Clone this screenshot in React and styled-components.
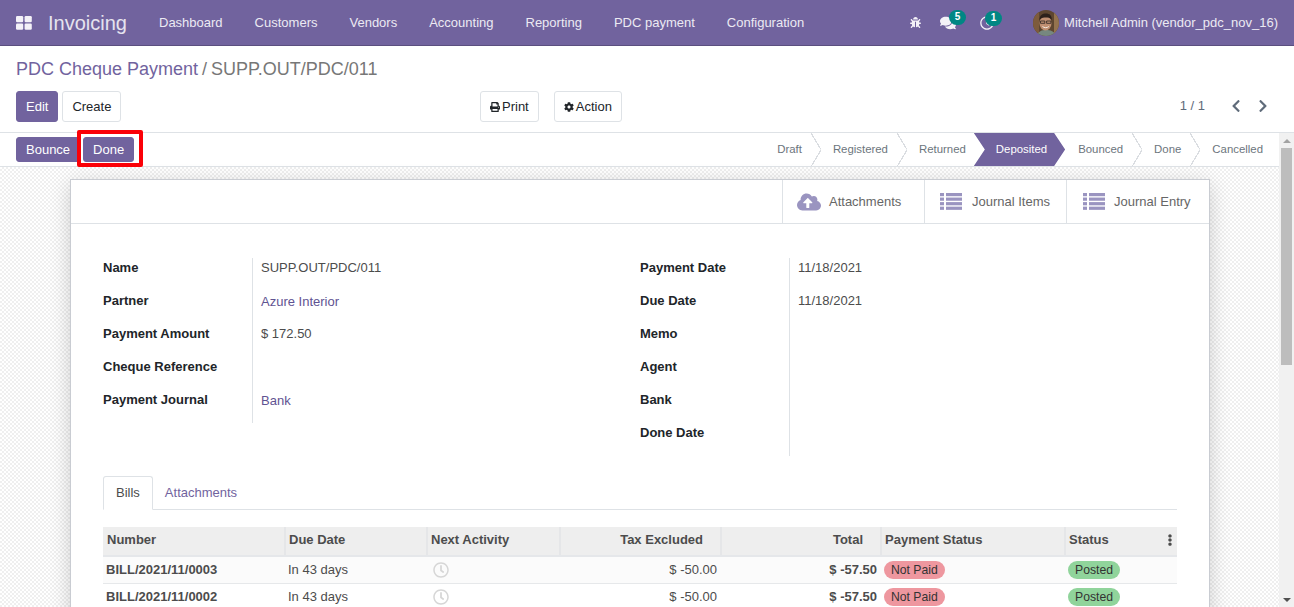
import React from 'react';
import styled, { createGlobalStyle } from 'styled-components';
import { FaBug, FaComments, FaPrint, FaCog, FaCloudUploadAlt, FaChevronLeft, FaChevronRight, FaEllipsisV, FaRegClock } from 'react-icons/fa';

const Global = createGlobalStyle`
  html, body { margin: 0; padding: 0; height: 100%; overflow: hidden; }
  body { font-family: "Liberation Sans", Arial, sans-serif; font-size: 13px; color: #4c4c4c; background: #fff; }
  #root { height: 100%; }
  * { box-sizing: border-box; }
`;

const Page = styled.div`height: 607px; display: flex; flex-direction: column; overflow: hidden;`;

const Nav = styled.header`
  height: 46px; flex: none; background: #71639e; border-bottom: 1px solid #5b4f7f;
  display: flex; align-items: center; color: #fff; padding-left: 16px; padding-right: 16px;
`;
const AppsIcon = styled.svg`width: 16px; height: 14px; fill: #f4f2f8; flex: none; margin-right: 16px;`;
const Brand = styled.span`font-size: 20px; color: #e6e3ef; margin-right: 16px; width: 79px; padding-top: 1px;`;
const NavItem = styled.span`font-size: 13px; padding: 0 16px; color: #eceaf3; white-space: nowrap;`;
const NavRight = styled.div`margin-left: auto; display: flex; align-items: center;`;
const NavIcon = styled.span`
  position: relative; display: inline-flex; align-items: center; justify-content: center;
  color: #f4f2f8; font-size: ${p => p.$size || 13}px; margin-left: ${p => p.$ml || 0}px; width: ${p => p.$w || 16}px;
`;
const Badge = styled.span`
  position: absolute; top: -5px; left: ${p => p.$left}px; min-width: 17px; height: 15px; padding: 0 4px; border-radius: 8px;
  background: #008784; color: #fff; font-size: 10px; font-weight: 700; line-height: 13px; text-align: center;
`;
const Avatar = styled.svg`width: 26px; height: 26px; border-radius: 50%; margin-left: 38px; margin-right: 5px; flex: none;`;
const UserName = styled.span`font-size: 13px; color: #eceaf3; white-space: nowrap;`;

const ControlPanel = styled.section`
  height: 87px; flex: none; background: #fff; border-bottom: 1px solid #dee2e6; padding: 12px 16px 0 16px;
`;
const Crumbs = styled.div`font-size: 18px; line-height: 23px; display: flex; gap: 4px; color: #777;`;
const CrumbLink = styled.span`color: #71639e;`;
const PanelRow = styled.div`display: grid; grid-template-columns: 464px 1fr auto; margin-top: 10px; height: 31px;`;
const ButtonGroup = styled.div`display: flex; gap: ${p => p.$gap || 4}px;`;
const Button = styled.button`
  font: inherit; font-size: 13px; height: ${p => p.$h || 31}px; padding: 0 ${p => p.$pad || 9}px; border-radius: 3px; cursor: pointer;
  display: inline-flex; align-items: center; gap: 2px;
  border: 1px solid ${p => p.$primary ? '#71639e' : '#dee2e6'};
  background: ${p => p.$primary ? '#71639e' : '#fff'};
  color: ${p => p.$primary ? '#fff' : '#212529'};
  svg { font-size: 10px; }
`;
const Pager = styled.div`display: flex; align-items: center; height: 31px; margin-right: 10px; margin-top: -1px;`;
const PagerText = styled.span`margin-right: 26px; color: #5f6b7a;`;
const PagerArrow = styled.span`
  display: inline-flex; width: 10px; color: #5f6b7a; font-size: 14px; margin-right: ${p => p.$mr || 0}px;
`;

const Workspace = styled.div`flex: 1; min-height: 0; display: flex;`;
const Content = styled.div`flex: 1; min-width: 0;`;
const ScrollTrack = styled.div`
  width: 15px; flex: none; background: #f1f1f1; display: flex; flex-direction: column; align-items: center;
`;
const ScrollArrow = styled.span`
  height: 15px; flex: none; display: flex; align-items: center; justify-content: center;
  margin-top: ${p => p.$down ? 'auto' : 0};
  &::before {
    content: ""; border-left: 4px solid transparent; border-right: 4px solid transparent;
    ${p => p.$down ? 'border-top: 4px solid #505050;' : 'border-bottom: 4px solid #a3a3a3;'}
  }
`;
const ScrollThumb = styled.span`width: 11px; height: 217px; background: #bdbdbd; flex: none;`;

const StatusBar = styled.div`
  height: 34px; background: #fff; border-bottom: 1px solid #dee2e6; display: flex; align-items: center; justify-content: space-between; padding-left: 16px;
`;
const Actions = styled.div`display: flex; gap: 3px; margin-top: -1px;`;
const Highlighted = styled.span`
  position: relative; display: inline-flex;
  &::after {
    content: ""; position: absolute; left: -6px; right: -9px; top: -7px; bottom: -5px; border: 4px solid #fb0007; border-radius: 2px; pointer-events: none;
  }
`;
const Steps = styled.div`display: flex; height: 33px; align-items: stretch;`;
const Step = styled.span`
  position: relative; font-size: 11.4px; line-height: 33px; color: ${p => p.$active ? '#fff' : '#6c757d'};
  padding: 0 ${p => p.$last ? 16 : 18}px 0 13px; white-space: nowrap;
  &::after {
    content: ""; display: ${p => p.$last || p.$active || p.$beforeActive ? 'none' : 'block'};
    position: absolute; right: -1px; top: 0; width: 10px; height: 33px;
    background: linear-gradient(to top right, transparent calc(50% - .6px), #dadde1 calc(50% - .6px), #dadde1 calc(50% + .6px), transparent calc(50% + .6px)) top / 100% 50% no-repeat,
      linear-gradient(to bottom right, transparent calc(50% - .6px), #dadde1 calc(50% - .6px), #dadde1 calc(50% + .6px), transparent calc(50% + .6px)) bottom / 100% 50% no-repeat;
  }
`;
const ActiveStep = styled(Step)`
  background: #71639e; margin-left: -10px; padding: 0 18px 0 22px;
  clip-path: polygon(0 0, calc(100% - 11px) 0, 100% 50%, calc(100% - 11px) 100%, 0 100%, 11px 50%);
`;

const Canvas = styled.div`
  background-color: #fff;
  background-image: conic-gradient(#efefef 25%, #fff 0 50%, #efefef 0 75%, #fff 0);
  background-size: 4px 4px; padding: 12px 69px 24px 70px; min-height: 800px;
`;
const Sheet = styled.main`
  background: #fff; border: 1px solid #c9ccd2; box-shadow: 0 5px 20px -1px rgba(0,0,0,.2); padding-bottom: 40px;
`;
const StatRow = styled.div`display: flex; justify-content: flex-end; height: 44px; border-bottom: 1px solid #dee2e6;`;
const StatButton = styled.div`
  display: flex; align-items: center; gap: ${p => p.$gap || 10}px; width: ${p => p.$w || 142}px; padding-left: ${p => p.$pl || 15}px; border-left: 1px solid #dee2e6; color: #666; white-space: nowrap;
  svg { color: #9a94c0; fill: #9a94c0; flex: none; }
  > svg:not([data-list]) { font-size: 24px; }
`;
const ListIcon = styled.svg`width: 22px; height: 17px;`;
const FormBody = styled.div`padding: 34px 32px 0 32px;`;
const Groups = styled.div`display: grid; grid-template-columns: 537px 1fr;`;
const Group = styled.div`display: grid; grid-template-columns: 149px 1fr; grid-auto-rows: 33px;`;
const Label = styled.div`font-weight: 700; color: #212529; padding-top: 2px; line-height: 15px;`;
const Value = styled.div`
  border-left: 1px solid #dee2e6; padding: ${p => p.$link ? 3 : 2}px 0 0 8px; line-height: 15px; color: ${p => p.$link ? '#5f5392' : '#4c4c4c'};
`;
const Tabs = styled.div`display: flex; margin-top: 20px; height: 34px; border-bottom: 1px solid #dee2e6;`;
const Tab = styled.div`
  height: 34px; padding: 0 12px; line-height: ${p => p.$active ? 32 : 34}px; white-space: nowrap;
  color: ${p => p.$active ? '#4c4c4c' : '#71639e'};
  ${p => p.$active ? 'border: 1px solid #dee2e6; border-bottom-color: #fff; border-radius: 3px 3px 0 0; background: #fff;' : ''}
`;
const Table = styled.table`
  width: 100%; table-layout: fixed; border-collapse: collapse; margin-top: 17px; font-size: 13px;
`;
const Th = styled.th`
  height: 29px; background: #eeeeee; border-bottom: 2px solid #e5e7ea; border-right: 2px solid #e5e6e8;
  padding: 0 ${p => p.$right ? 17 : 4}px 4px 3px; font-weight: 700; color: #4c4c4c;
  text-align: ${p => p.$right ? 'right' : 'left'}; white-space: nowrap; position: relative;
  &:first-child { padding-left: 4px; }
  &:last-child { border-right: 0; }
`;
const Td = styled.td`
  height: 27px; border-bottom: 1px solid #e6e8ea; padding: 0 4px 0 3px; color: #4c4c4c; background: ${p => p.$odd ? '#fbfbfb' : '#fff'};
  font-weight: ${p => p.$bold ? 700 : 400}; text-align: ${p => p.$right ? 'right' : 'left'}; white-space: nowrap; vertical-align: middle;
`;
const Pill = styled.span`
  display: inline-block; height: 18px; line-height: 18px; padding: 0 7px; border-radius: 9px; font-size: 12.2px; color: #333;
  background: ${p => p.$ok ? '#90d49b' : '#ee979f'};
`;
const ClockIcon = styled.span`display: inline-flex; color: #d6d6d6; font-size: 16px; margin-left: 3px; margin-top: 3px;`;
const KebabIcon = styled.span`position: absolute; right: 1px; top: 7px; font-size: 12px; color: #4c4c4c; display: inline-flex;`;

const navItems = ['Dashboard', 'Customers', 'Vendors', 'Accounting', 'Reporting', 'PDC payment', 'Configuration'];
const steps = ['Draft', 'Registered', 'Returned', 'Deposited', 'Bounced', 'Done', 'Cancelled'];
const left = [['Name', 'SUPP.OUT/PDC/011'], ['Partner', 'Azure Interior', true], ['Payment Amount', '$ 172.50'], ['Cheque Reference', ''], ['Payment Journal', 'Bank', true]];
const right = [['Payment Date', '11/18/2021'], ['Due Date', '11/18/2021'], ['Memo', ''], ['Agent', ''], ['Bank', ''], ['Done Date', '']];
const bills = ['BILL/2021/11/0003', 'BILL/2021/11/0002'];

const JournalIcon = () => (
  <ListIcon viewBox="0 0 22 17" data-list="true" aria-hidden="true">
    {[0, 4.55, 9.1, 13.65].map(y => (
      <React.Fragment key={y}>
        <rect x="0" y={y} width="4" height="3.2" />
        <rect x="6" y={y} width="16" height="3.2" />
      </React.Fragment>
    ))}
  </ListIcon>
);

export default function App() {
  return (
    <Page>
      <Global />
      <Nav>
        <AppsIcon viewBox="0 0 16 14" aria-hidden="true">
          <rect x="0" y="0" width="7.2" height="6.2" rx="1.2" />
          <rect x="8.6" y="0" width="7.2" height="6.2" rx="1.2" />
          <rect x="0" y="7.6" width="7.2" height="6.2" rx="1.2" />
          <rect x="8.6" y="7.6" width="7.2" height="6.2" rx="1.2" />
        </AppsIcon>
        <Brand>Invoicing</Brand>
        {navItems.map(n => <NavItem key={n}>{n}</NavItem>)}
        <NavRight>
          <NavIcon $size={11}><FaBug /></NavIcon>
          <NavIcon $size={16} $ml={16} $w={17}><FaComments /><Badge $left={10}>5</Badge></NavIcon>
          <NavIcon $size={14} $ml={23}><FaRegClock /><Badge $left={6}>1</Badge></NavIcon>
          <Avatar viewBox="0 0 26 26" aria-hidden="true">
            <rect width="26" height="26" fill="#5e4630" />
            <rect x="0" y="0" width="6" height="26" fill="#7d5b3c" />
            <rect x="21" y="0" width="5" height="26" fill="#94734f" />
            <path d="M4 26c1-5 5-6 9-6s9 1 10 6z" fill="#76877f" />
            <ellipse cx="12.5" cy="13" rx="6" ry="7.6" fill="#c08f72" />
            <path d="M6.5 10c0-5 3-6.5 6.5-6.5s6 2 5.8 6.5c-2-2.6-4-2.6-5.8-2.6s-4.5 0-6.5 2.6z" fill="#2d211b" />
            <path d="M7.5 11h4.3v2.3H7.5zM13.6 11h4.3v2.3h-4.3z" fill="none" stroke="#2b2320" strokeWidth=".8" />
            <path d="M9.5 16.5c1.800 1.600 4.500 1.600 6.300 0" fill="none" stroke="#f4e9e0" strokeWidth="1" />
          </Avatar>
          <UserName>Mitchell Admin (vendor_pdc_nov_16)</UserName>
        </NavRight>
      </Nav>
      <ControlPanel>
        <Crumbs><CrumbLink>PDC Cheque Payment</CrumbLink><span>/</span><span>SUPP.OUT/PDC/011</span></Crumbs>
        <PanelRow>
          <ButtonGroup>
            <Button $primary>Edit</Button>
            <Button>Create</Button>
          </ButtonGroup>
          <ButtonGroup $gap={15}>
            <Button><FaPrint />Print</Button>
            <Button><FaCog />Action</Button>
          </ButtonGroup>
          <Pager>
            <PagerText>1 / 1</PagerText>
            <PagerArrow $mr={17}><FaChevronLeft /></PagerArrow>
            <PagerArrow><FaChevronRight /></PagerArrow>
          </Pager>
        </PanelRow>
      </ControlPanel>
      <Workspace>
        <Content>
          <StatusBar>
            <Actions>
              <Button $primary $h={25}>Bounce</Button>
              <Highlighted><Button $primary $h={25}>Done</Button></Highlighted>
            </Actions>
            <Steps>
              {steps.map((s, i) => s === 'Deposited'
                ? <ActiveStep key={s} $active>{s}</ActiveStep>
                : <Step key={s} $last={i === steps.length - 1} $beforeActive={steps[i + 1] === 'Deposited'}>{s}</Step>)}
            </Steps>
          </StatusBar>
          <Canvas>
            <Sheet>
              <StatRow>
                <StatButton $gap={8} $pl={14}><FaCloudUploadAlt />Attachments</StatButton>
                <StatButton><JournalIcon />Journal Items</StatButton>
                <StatButton $w={143} $pl={16} $gap={9}><JournalIcon />Journal Entry</StatButton>
              </StatRow>
              <FormBody>
                <Groups>
                  <Group>
                    {left.map(([l, v, link]) => (
                      <React.Fragment key={l}><Label>{l}</Label><Value $link={link}>{v}</Value></React.Fragment>
                    ))}
                  </Group>
                  <Group>
                    {right.map(([l, v]) => (
                      <React.Fragment key={l}><Label>{l}</Label><Value>{v}</Value></React.Fragment>
                    ))}
                  </Group>
                </Groups>
                <Tabs>
                  <Tab $active>Bills</Tab>
                  <Tab>Attachments</Tab>
                </Tabs>
                <Table>
                  <colgroup>
                    <col style={{ width: 182 }} /><col style={{ width: 142 }} /><col style={{ width: 133 }} />
                    <col style={{ width: 161 }} /><col style={{ width: 160 }} /><col style={{ width: 184 }} /><col />
                  </colgroup>
                  <thead>
                    <tr>
                      <Th>Number</Th><Th>Due Date</Th><Th>Next Activity</Th><Th $right>Tax Excluded</Th><Th $right>Total</Th><Th>Payment Status</Th>
                      <Th>Status<KebabIcon><FaEllipsisV /></KebabIcon></Th>
                    </tr>
                  </thead>
                  <tbody>
                    {bills.map((b, i) => (
                      <tr key={b}>
                        <Td $odd={i % 2 === 0} $bold>{b}</Td>
                        <Td $odd={i % 2 === 0}>In 43 days</Td>
                        <Td $odd={i % 2 === 0}><ClockIcon><FaRegClock /></ClockIcon></Td>
                        <Td $odd={i % 2 === 0} $right>$ -50.00</Td>
                        <Td $odd={i % 2 === 0} $right $bold>$ -57.50</Td>
                        <Td $odd={i % 2 === 0}><Pill>Not Paid</Pill></Td>
                        <Td $odd={i % 2 === 0}><Pill $ok>Posted</Pill></Td>
                      </tr>
                    ))}
                  </tbody>
                </Table>
              </FormBody>
            </Sheet>
          </Canvas>
        </Content>
        <ScrollTrack>
          <ScrollArrow />
          <ScrollThumb />
          <ScrollArrow $down />
        </ScrollTrack>
      </Workspace>
    </Page>
  );
}
